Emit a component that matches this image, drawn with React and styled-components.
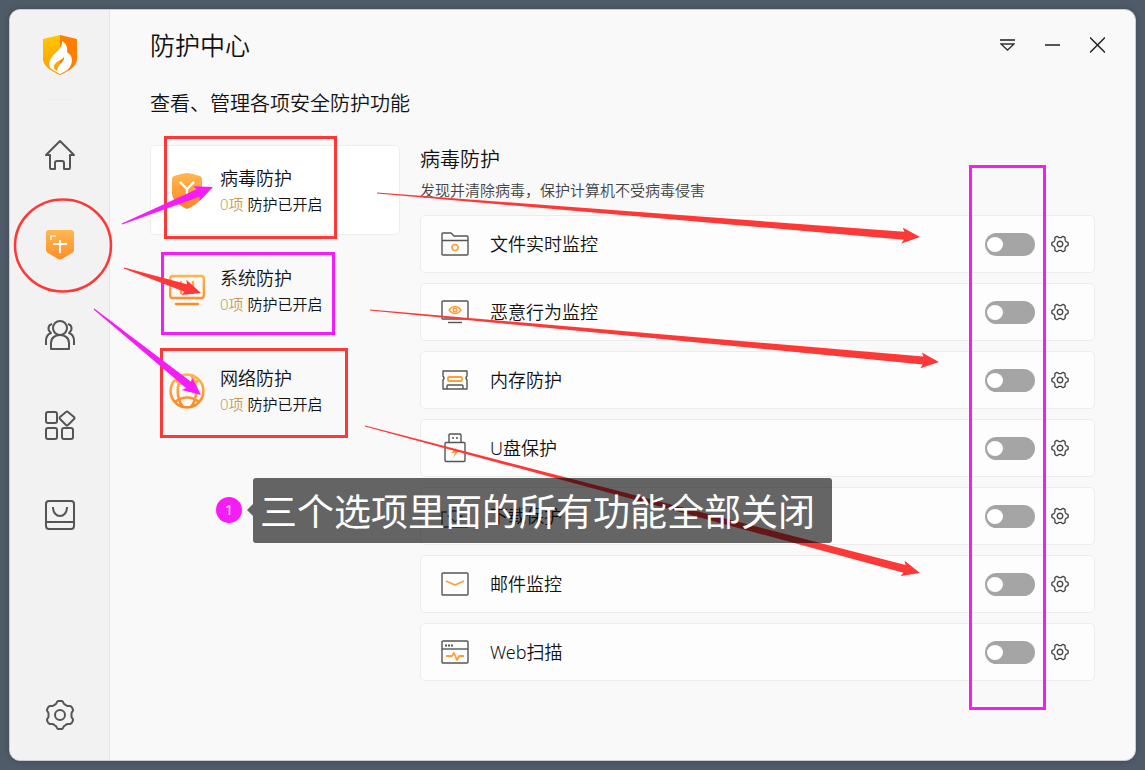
import React, { useState } from 'react';
import styled, { createGlobalStyle } from 'styled-components';

const RED = '#fd3938';
const MAGENTA = '#f51cf7';
const INK = '#555555';
const ORANGE = '#ff9f38';

const GlobalStyle = createGlobalStyle`
  * {
    box-sizing: border-box;
  }
  body {
    margin: 0;
    background: #505b69;
    color: #111111;
    font-family: 'Noto Sans', 'Noto Sans CJK SC', sans-serif;
    font-weight: 350;
  }
  button {
    padding: 0;
    border: none;
    background: transparent;
    color: inherit;
    font: inherit;
    cursor: pointer;
  }
  h1, h2, p, ul {
    margin: 0;
    padding: 0;
    font-weight: inherit;
  }
  svg {
    display: block;
  }
`;

const Desktop = styled.div`
  position: relative;
  display: flex;
  min-height: 100vh;
  padding: 9px;
`;

const Window = styled.div`
  display: flex;
  flex: 1;
  background: #f9f9f9;
  border: 1px solid #c9ccd1;
  border-radius: 11px;
  overflow: hidden;
  box-shadow: 0 0 6px rgba(0, 0, 0, 0.2);
`;

const Sidebar = styled.nav`
  display: flex;
  flex-direction: column;
  width: 100px;
  background: #f2f2f2;
  border-right: 1px solid #e6e6e6;
`;

const LogoArea = styled.div`
  display: flex;
  align-items: center;
  justify-content: center;
  height: 89px;
`;

const Divider = styled.div`
  width: 28px;
  height: 1px;
  margin: 0 auto 10px;
  background: #ededed;
`;

const NavButton = styled.button`
  display: flex;
  align-items: center;
  justify-content: center;
  height: 90px;
  margin-top: ${(props) => (props.$last ? 'auto' : '0')};
`;

const Main = styled.main`
  flex: 1;
  min-width: 0;
`;

const TitleBar = styled.header`
  display: flex;
  align-items: center;
  justify-content: space-between;
  height: 70px;
  padding: 0 15px 0 40px;
`;

const Title = styled.h1`
  font-size: 25px;
  line-height: 32px;
`;

const WindowButtons = styled.div`
  display: flex;
`;

const WindowButton = styled.button`
  display: flex;
  align-items: center;
  justify-content: center;
  width: 45px;
  height: 32px;
`;

const Content = styled.div`
  padding: 9px 40px 20px;
`;

const Subtitle = styled.p`
  margin-bottom: 26px;
  font-size: 20px;
  line-height: 30px;
`;

const Columns = styled.div`
  display: grid;
  grid-template-columns: 250px 1fr;
  gap: 20px;
`;

const TabList = styled.div`
  display: flex;
  flex-direction: column;
  gap: 10px;
`;

const Tab = styled.button`
  display: flex;
  align-items: center;
  gap: 15px;
  height: 90px;
  padding: 2px 0 0 18px;
  text-align: left;
  border: 1px solid ${(props) => (props.$active ? '#ededed' : 'transparent')};
  border-radius: 5px;
  background: ${(props) => (props.$active ? '#ffffff' : 'transparent')};
`;

const TabName = styled.div`
  font-size: 18px;
  line-height: 26px;
`;

const TabStatus = styled.div`
  font-size: 15px;
  line-height: 26px;
`;

const Count = styled.span`
  color: #cb9a50;
`;

const DetailTitle = styled.h2`
  font-size: 20px;
  line-height: 30px;
`;

const DetailText = styled.p`
  margin-bottom: 10px;
  font-size: 15px;
  line-height: 30px;
  color: #444444;
`;

const FeatureList = styled.ul`
  display: flex;
  flex-direction: column;
  gap: 10px;
  list-style: none;
`;

const Feature = styled.li`
  display: flex;
  align-items: center;
  height: 58px;
  padding: 0 23px 0 19px;
  background: #fdfdfd;
  border: 1px solid #ececec;
  border-radius: 5px;
`;

const FeatureLabel = styled.label`
  flex: 1;
  padding-left: 20px;
  font-size: 18px;
  line-height: 26px;
`;

const Switch = styled.input`
  appearance: none;
  display: flex;
  align-items: center;
  width: 50px;
  height: 23px;
  margin: 0;
  padding: 0 2px;
  border-radius: 12px;
  background: ${(props) => (props.checked ? ORANGE : '#a5a5a5')};
  cursor: pointer;

  &::before {
    content: '';
    width: 16px;
    height: 15px;
    margin-left: ${(props) => (props.checked ? 'auto' : '0')};
    border-radius: 50%;
    background: #ffffff;
  }
`;

const GearButton = styled.button`
  display: flex;
  align-items: center;
  justify-content: center;
  width: 22px;
  height: 22px;
  margin-left: 14px;
`;

const Marks = styled.svg`
  position: absolute;
  top: 0;
  left: 0;
  pointer-events: none;
`;

const StepBadge = styled.div`
  position: absolute;
  top: 497px;
  left: 216px;
  width: 26px;
  height: 26px;
  border-radius: 50%;
  background: ${MAGENTA};
  color: #ffffff;
  font-size: 15px;
  font-weight: 400;
  line-height: 24px;
  text-align: center;
`;

const Callout = styled.div`
  position: absolute;
  top: 478px;
  left: 253px;
  width: 579px;
  height: 65px;
  padding-left: 7px;
  border-radius: 3px;
  background: rgba(0, 0, 0, 0.6);
  color: #ffffff;
  font-size: 37px;
  font-weight: 400;
  line-height: 68px;
  white-space: nowrap;

  &::before {
    content: '';
    position: absolute;
    top: 26px;
    left: -6px;
    border: 6px solid transparent;
    border-left-width: 0;
    border-right-color: rgba(0, 0, 0, 0.6);
  }
`;

/* outline of a six lobed cog round 0,0 */
const cogPath = (radius, depth, turn) => {
  const points = [];
  for (let i = 0; i < 120; i += 1) {
    const angle = (i / 120) * Math.PI * 2;
    const wave = Math.tanh(2 * Math.cos(6 * (angle - turn))) / Math.tanh(2);
    const r = radius + depth * wave;
    points.push(`${(r * Math.cos(angle)).toFixed(2)} ${(r * Math.sin(angle)).toFixed(2)}`);
  }
  return `M${points.join('L')}Z`;
};

const Logo = () => (
  <svg width="34" height="40" viewBox="0 0 34 40" aria-hidden="true">
    <defs>
      <linearGradient id="logoLeft" x1="0" y1="0" x2="0" y2="1">
        <stop offset="0" stopColor="#ffc800" />
        <stop offset="1" stopColor="#ff9a00" />
      </linearGradient>
    </defs>
    <path d="M17 0L0 4v20c0 7 8 12 17 16z" fill="url(#logoLeft)" />
    <path d="M17 0l17 4v20c0 7-8 12-17 16z" fill="#ff7e00" />
    <path
      d="M19 6c1 6-6 11-10 16-4 5-4 10 1 13l7 4 6-3c6-4 7-11 5-15-1-2-3-3-4-4 1-4-1-9-5-11zM21 22c1 5-6 6-7 14-3-2-4-4-2-7 2-3 7-4 9-7z"
      fill="#ffffff"
      fillRule="evenodd"
    />
  </svg>
);

const LineIcon = ({ size = 32, children }) => (
  <svg
    width={size}
    height={size}
    viewBox={`0 0 ${size} ${size}`}
    fill="none"
    stroke={INK}
    strokeWidth="2"
    strokeLinejoin="round"
    aria-hidden="true"
  >
    {children}
  </svg>
);

const HomeIcon = () => (
  <LineIcon>
    <path d="M16 2L2 16h4v13q0 1 1 1h4v-6q0-2 2-2h5q2 0 2 2v6h5q1 0 1-1V16h4z" />
  </LineIcon>
);

const Gradient = ({ id }) => (
  <defs>
    <linearGradient id={id} gradientUnits="userSpaceOnUse" x1="0" y1="0" x2="0" y2="36">
      <stop offset="0" stopColor="#ffb850" />
      <stop offset="1" stopColor="#ff8420" />
    </linearGradient>
  </defs>
);

const ShieldIcon = () => (
  <svg width="28" height="30" viewBox="0 0 28 30" fill="none" aria-hidden="true">
    <Gradient id="navShield" />
    <path d="M3 0h22q3 0 3 3v17q0 2-2 3l-10 6q-2 1-4 0L2 23q-2-1-2-3V3q0-3 3-3z" fill="url(#navShield)" />
    <path d="M5 10V6h5" stroke="#fff0dc" strokeWidth="1.6" />
    <path d="M7 14h14M14 10v13" stroke="#ffffff" strokeWidth="1.8" />
  </svg>
);

const UsersIcon = () => (
  <LineIcon>
    <circle cx="16" cy="9" r="7" />
    <path d="M7 30v-6c0-5 4-8 9-8s9 3 9 8v6z" />
    <path d="M8 5c-4 1-5 6-1 9-3 1-5 4-5 8v4M24 5c4 1 5 6 1 9 3 1 5 4 5 8v4" />
  </LineIcon>
);

const AppsIcon = () => (
  <LineIcon>
    <rect x="2" y="3" width="11" height="11" rx="2" />
    <rect x="2" y="19" width="11" height="11" rx="2" />
    <rect x="18" y="19" width="11" height="11" rx="2" />
    <path d="M22 3q1-1 2 0l6 5q1 1 0 2l-6 6q-1 1-2 0l-6-6q-1-1 0-2z" />
  </LineIcon>
);

const StoreIcon = () => (
  <LineIcon>
    <rect x="2" y="2" width="28" height="28" rx="3" />
    <path d="M2 23h28M9 8c0 12 14 12 14 0" />
  </LineIcon>
);

const SettingsIcon = () => (
  <svg width="32" height="32" viewBox="-16 -16 32 32" fill="none" stroke={INK} strokeWidth="2" aria-hidden="true">
    <path d={cogPath(12.8, 1.3, Math.PI / 6)} />
    <circle r="5" />
  </svg>
);

const SmallCog = () => (
  <svg width="18" height="18" viewBox="-9 -9 18 18" fill="none" stroke="#4a4a4a" strokeWidth="1.4" aria-hidden="true">
    <path d={cogPath(7.3, 0.9, 0)} />
    <circle r="2.8" />
  </svg>
);

const VirusIcon = () => (
  <svg width="36" height="36" viewBox="0 0 36 36" fill="none" aria-hidden="true">
    <Gradient id="virus" />
    <path d="M18 0q3 0 13 3 2 1 2 3v14c0 8-8 13-15 16C11 33 3 28 3 20V6q0-2 2-3 10-3 13-3z" fill="url(#virus)" />
    <path d="M11 9l7 7 7-7M18 16v10" stroke="#ffffff" strokeWidth="2.4" />
  </svg>
);

const SystemIcon = () => (
  <svg width="36" height="36" viewBox="0 0 36 36" fill="none" stroke="url(#system)" strokeWidth="2.4" aria-hidden="true">
    <Gradient id="system" />
    <rect x="1.2" y="3" width="33.6" height="22" rx="2.5" />
    <path d="M12 9v11M18 13v7M24 9v11M7 30.99L29 31" strokeLinecap="round" />
  </svg>
);

const NetworkIcon = () => (
  <svg width="36" height="36" viewBox="0 0 36 36" fill="none" stroke="url(#network)" strokeWidth="2.6" aria-hidden="true">
    <Gradient id="network" />
    <circle cx="18" cy="18" r="16.4" />
    <path d="M14 2c-7 9-7 23 0 32M22 2c7 9 7 23 0 32M6 7c7 6 17 6 24 0M6 29c7-6 17-6 24 0" />
  </svg>
);

const FeatureIcon = ({ children }) => (
  <svg
    width="30"
    height="30"
    viewBox="0 0 30 30"
    fill="none"
    stroke={INK}
    strokeWidth="1.4"
    strokeLinejoin="round"
    aria-hidden="true"
  >
    {children}
  </svg>
);

const features = [
  {
    id: 'file',
    name: '文件实时监控',
    icon: (
      <>
        <path d="M2 25V5q0-1 1-1h8l3 3h13q1 0 1 1v17q0 1-1 1H3q-1 0-1-1zM2 11.5h26" />
        <circle cx="15" cy="18.5" r="3" stroke={ORANGE} strokeWidth="1.6" />
      </>
    ),
  },
  {
    id: 'behavior',
    name: '恶意行为监控',
    icon: (
      <>
        <rect x="2" y="4" width="26" height="18" rx="1" />
        <path d="M8 25.5h14" />
        <path d="M9 13q6-7 12 0-6 7-12 0z" stroke={ORANGE} />
        <circle cx="15" cy="13" r="1.8" stroke={ORANGE} />
      </>
    ),
  },
  {
    id: 'memory',
    name: '内存防护',
    icon: (
      <>
        <path d="M3 6h24v5q-2 2 0 4v9H3v-9q2-2 0-4z" />
        <path d="M7 24v-3q0-1 1-1h14q1 0 1 1v3" />
        <rect x="8" y="12" width="14" height="4" rx="1" stroke={ORANGE} strokeWidth="1.8" />
      </>
    ),
  },
  {
    id: 'usb',
    name: 'U盘保护',
    icon: (
      <>
        <path d="M9 9V2q0-1 1-1h10q1 0 1 1v7M12 5h2M16 5h2" />
        <rect x="5" y="9.5" width="20" height="19" rx="1" />
        <path d="M17 14l-6 6h4l-2 5 6-7h-4z" fill={ORANGE} stroke="none" />
      </>
    ),
  },
  {
    id: 'download',
    name: '下载保护',
    icon: (
      <>
        <path d="M7 11H2v14q0 1 1 1h24q1 0 1-1V11h-5M11 10v5H8l7 6 7-6h-3v-5z" />
        <path d="M11 6h8" stroke={ORANGE} strokeWidth="2" />
      </>
    ),
  },
  {
    id: 'mail',
    name: '邮件监控',
    icon: (
      <>
        <rect x="2" y="4" width="26" height="22" rx="1" />
        <path d="M6 12l9 4 9-4" stroke={ORANGE} strokeWidth="1.8" />
      </>
    ),
  },
  {
    id: 'web',
    name: 'Web扫描',
    icon: (
      <>
        <rect x="2" y="4" width="26" height="22" rx="1" />
        <path d="M2 12h26" />
        <path d="M5 8.5h2M8 8.5h2M11 8.5h2" strokeWidth="1.8" />
        <path d="M6 19h6l2-3 3 7 2-4h5" stroke={ORANGE} strokeWidth="1.8" />
      </>
    ),
  },
];

const tabs = [
  { id: 'virus', name: '病毒防护', Icon: VirusIcon },
  { id: 'system', name: '系统防护', Icon: SystemIcon },
  { id: 'network', name: '网络防护', Icon: NetworkIcon },
];

const navItems = [
  { label: '首页', Icon: HomeIcon },
  { label: '防护中心', Icon: ShieldIcon },
  { label: '家长控制', Icon: UsersIcon },
  { label: '安全工具', Icon: AppsIcon },
  { label: '应用商店', Icon: StoreIcon },
];

/* tapered arrow: a point at the tail that widens towards the head */
const Arrow = ({ from, to, color }) => {
  const [x1, y1] = from;
  const [x2, y2] = to;
  const length = Math.hypot(x2 - x1, y2 - y1);
  const neck = length - 16;
  const barb = length - 18;
  return (
    <polygon
      points={`0,-0.5 ${neck},-4 ${barb},-8 ${length},0 ${barb},8 ${neck},4 0,0.5`}
      fill={color}
      transform={`translate(${x1} ${y1}) rotate(${(Math.atan2(y2 - y1, x2 - x1) * 180) / Math.PI})`}
    />
  );
};

const Annotations = () => (
  <>
    <Marks width="1145" height="770" fill="none" strokeWidth="3" aria-hidden="true">
      <ellipse cx="63" cy="245.5" rx="48" ry="46" stroke={RED} strokeWidth="2.5" />
      <rect x="165.5" y="137.5" width="170" height="100" stroke={RED} />
      <rect x="162.5" y="253.5" width="171" height="80" stroke={MAGENTA} />
      <rect x="161.5" y="349.5" width="185" height="87" stroke={RED} />
      <rect x="970.5" y="166.5" width="74" height="542" stroke={MAGENTA} />
      <Arrow from={[122, 224]} to={[213, 187]} color={MAGENTA} />
      <Arrow from={[124, 268]} to={[201, 293]} color={RED} />
      <Arrow from={[94, 309]} to={[201, 395]} color={MAGENTA} />
      <Arrow from={[377, 193]} to={[920, 237]} color={RED} />
      <Arrow from={[370, 310]} to={[939, 362]} color={RED} />
      <Arrow from={[365, 426]} to={[920, 573]} color={RED} />
    </Marks>
    <StepBadge>1</StepBadge>
    <Callout>三个选项里面的所有功能全部关闭</Callout>
  </>
);

const App = () => {
  const [activeTab, setActiveTab] = useState('virus');
  const [enabled, setEnabled] = useState({});

  const toggle = (id) => setEnabled({ ...enabled, [id]: !enabled[id] });

  return (
    <Desktop>
      <GlobalStyle />
      <Window>
        <Sidebar>
          <LogoArea>
            <Logo />
          </LogoArea>
          <Divider />
          {navItems.map(({ label, Icon }) => (
            <NavButton key={label} aria-label={label}>
              <Icon />
            </NavButton>
          ))}
          <NavButton $last aria-label="设置">
            <SettingsIcon />
          </NavButton>
        </Sidebar>
        <Main>
          <TitleBar>
            <Title>防护中心</Title>
            <WindowButtons>
              <WindowButton aria-label="菜单">
                <svg width="15" height="16" viewBox="0 0 15 16" fill="none" stroke="#333333" aria-hidden="true">
                  <path d="M0 3h15" strokeWidth="2" stroke={INK} />
                  <path d="M1 7h13l-6.5 6z" strokeWidth="1.3" />
                </svg>
              </WindowButton>
              <WindowButton aria-label="最小化">
                <svg width="15" height="16" viewBox="0 0 15 16" fill="none" stroke={INK} aria-hidden="true">
                  <path d="M0 8h15" strokeWidth="2" />
                </svg>
              </WindowButton>
              <WindowButton aria-label="关闭">
                <svg width="15" height="16" viewBox="0 0 15 16" fill="none" stroke="#222222" aria-hidden="true">
                  <path d="M0 0.5l15 15M15 0.5L0 15.5" strokeWidth="1.5" />
                </svg>
              </WindowButton>
            </WindowButtons>
          </TitleBar>
          <Content>
            <Subtitle>查看、管理各项安全防护功能</Subtitle>
            <Columns>
              <TabList>
                {tabs.map(({ id, name, Icon }) => (
                  <Tab key={id} $active={id === activeTab} onClick={() => setActiveTab(id)}>
                    <Icon />
                    <div>
                      <TabName>{name}</TabName>
                      <TabStatus>
                        <Count>0项</Count> 防护已开启
                      </TabStatus>
                    </div>
                  </Tab>
                ))}
              </TabList>
              <section>
                <DetailTitle>病毒防护</DetailTitle>
                <DetailText>发现并清除病毒，保护计算机不受病毒侵害</DetailText>
                <FeatureList>
                  {features.map(({ id, name, icon }) => (
                    <Feature key={id}>
                      <FeatureIcon>{icon}</FeatureIcon>
                      <FeatureLabel htmlFor={id}>{name}</FeatureLabel>
                      <Switch
                        id={id}
                        type="checkbox"
                        checked={Boolean(enabled[id])}
                        onChange={() => toggle(id)}
                      />
                      <GearButton aria-label={`${name}设置`}>
                        <SmallCog />
                      </GearButton>
                    </Feature>
                  ))}
                </FeatureList>
              </section>
            </Columns>
          </Content>
        </Main>
      </Window>
      <Annotations />
    </Desktop>
  );
};

export default App;
